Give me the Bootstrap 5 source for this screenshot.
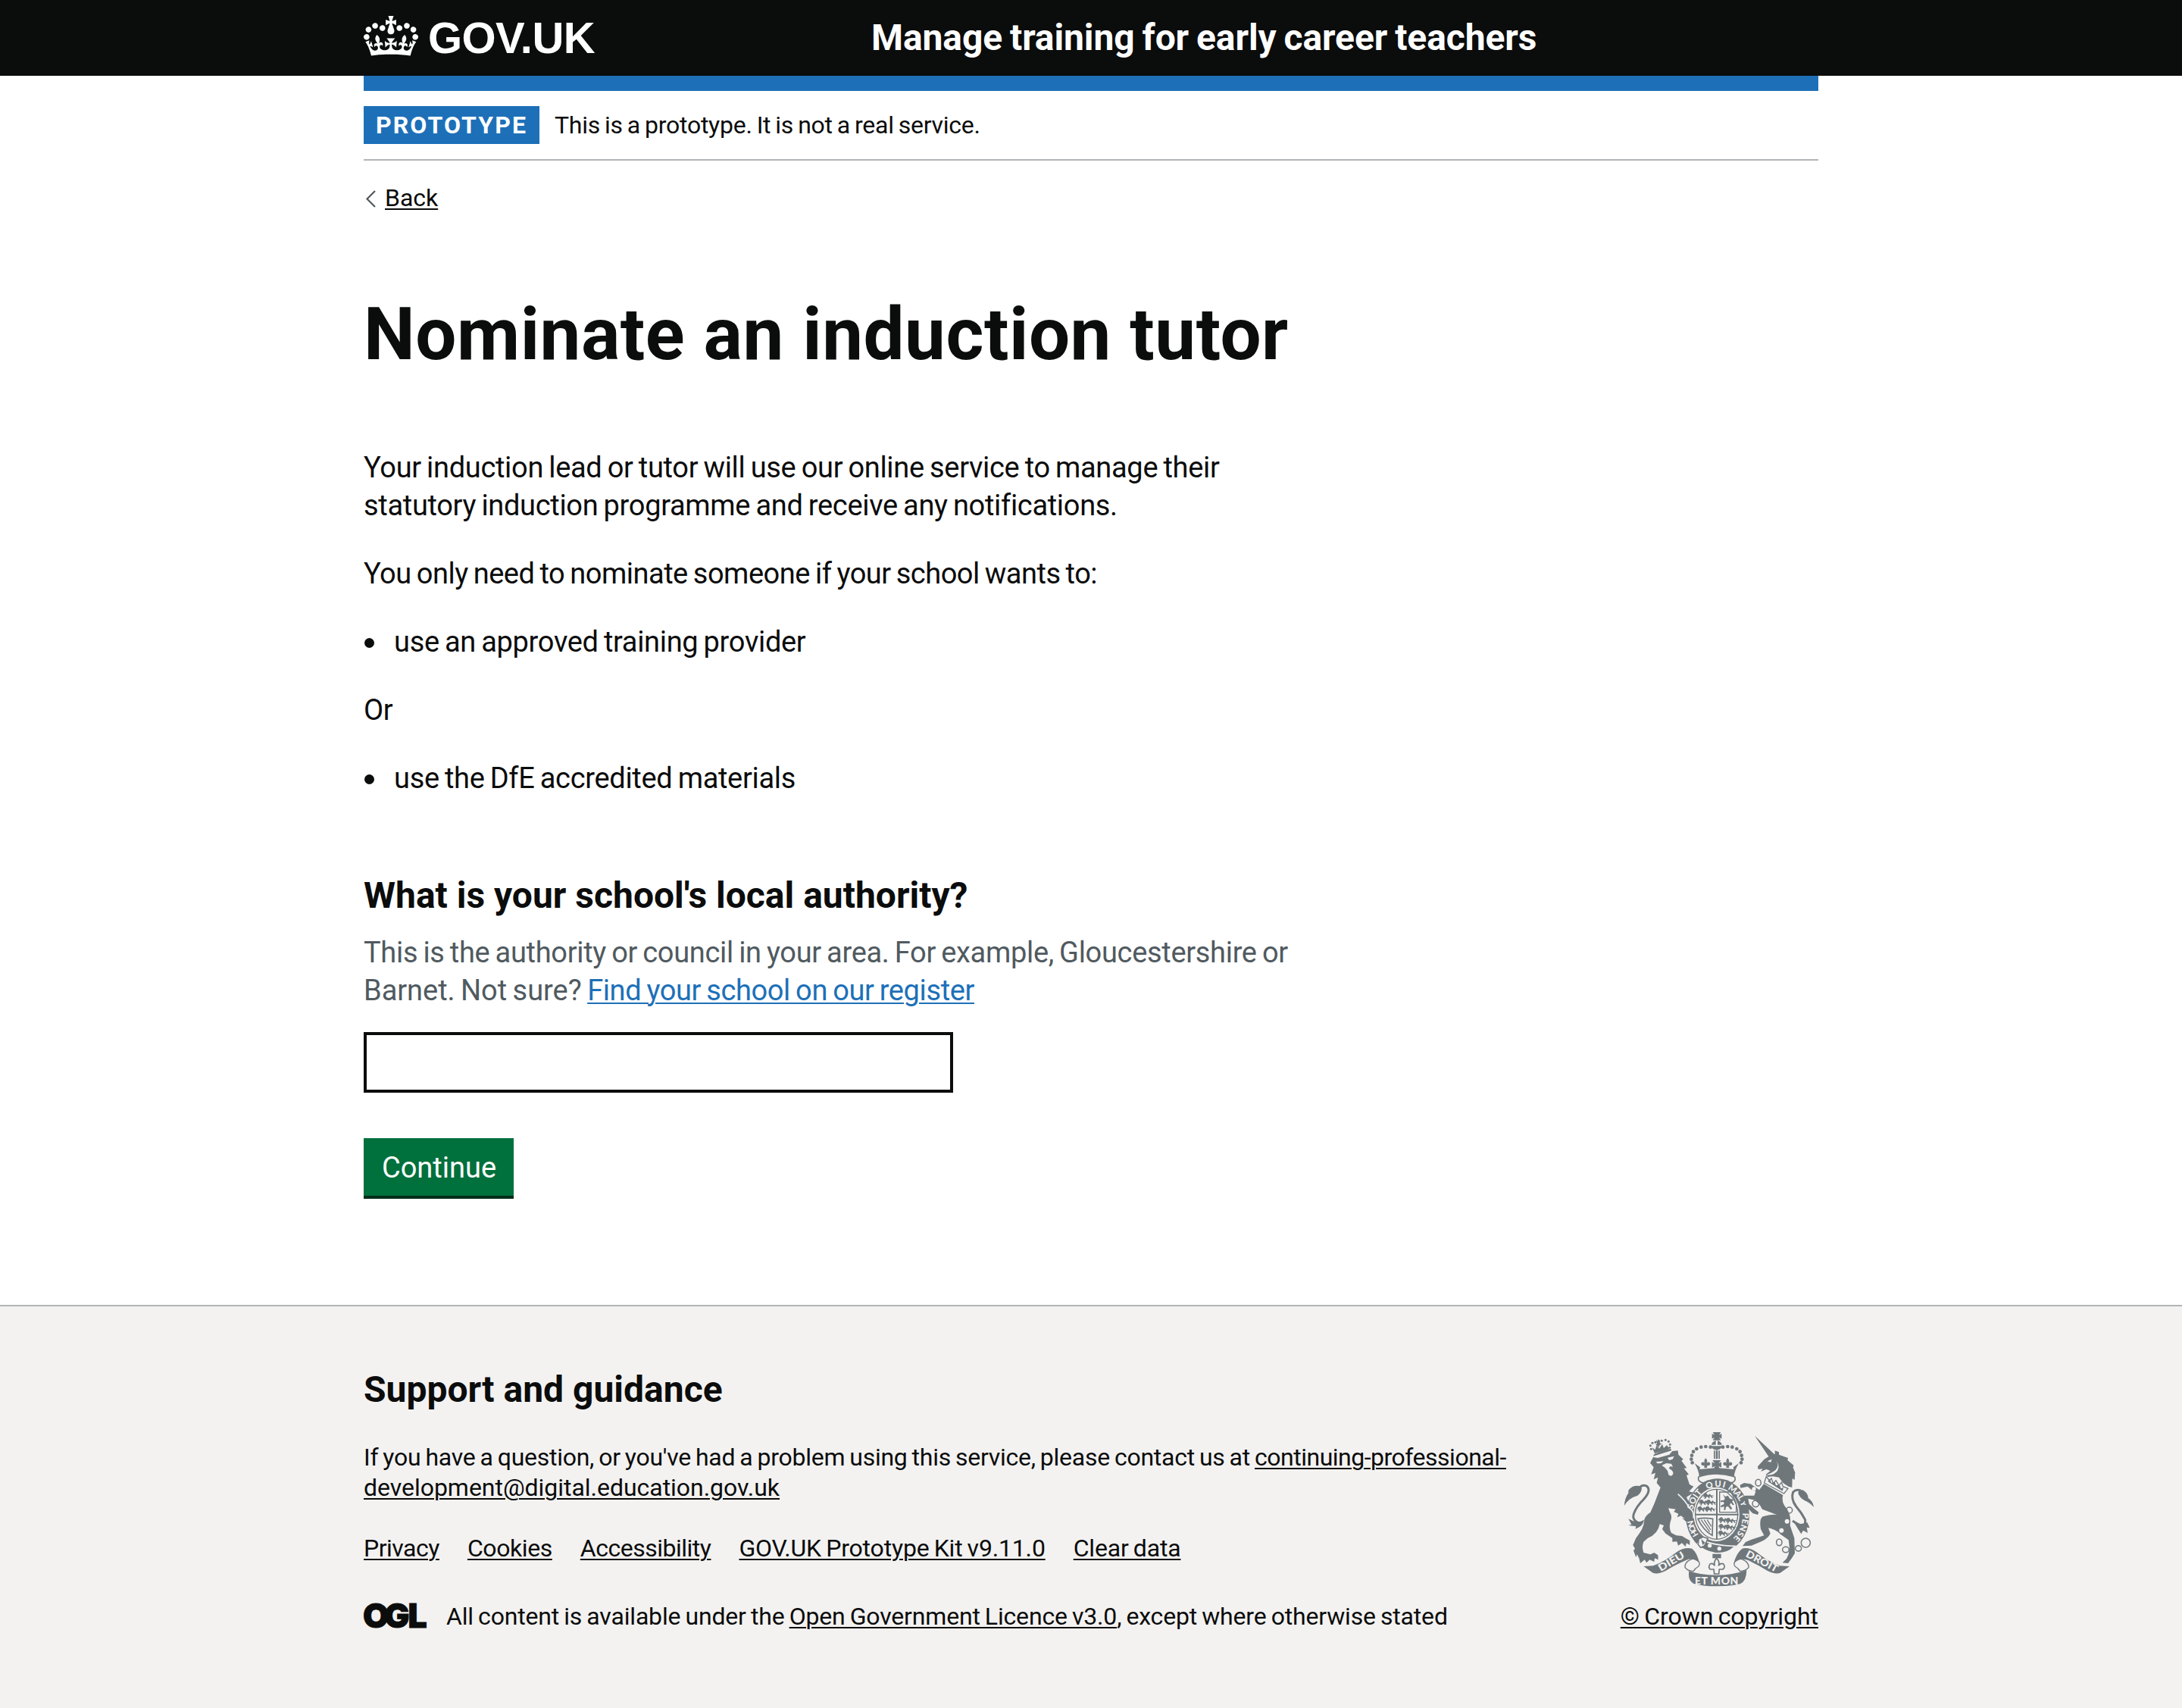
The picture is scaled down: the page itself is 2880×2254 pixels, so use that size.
<!DOCTYPE html>
<html lang="en">
<head>
<meta charset="utf-8">
<meta name="viewport" content="width=device-width, initial-scale=1">
<title>Nominate an induction tutor</title>
<link href="https://cdn.jsdelivr.net/npm/bootstrap@5.3.0/dist/css/bootstrap.min.css" rel="stylesheet">
<style>
:root{--ink:#0b0c0c;--blue:#1d70b8;--rule:#b1b4b6;--muted:#505a5f}
body{font-family:Roboto,"Noto Sans",sans-serif;color:var(--ink);background:#fff;font-size:38px;line-height:50px;min-height:2254px;letter-spacing:-.0083em;word-spacing:-.05em}
a,a:hover{color:var(--ink);text-decoration:underline;text-decoration-thickness:2px;text-underline-offset:3px}
p,ul{margin:0 0 40px}
.wrap{width:1920px;margin:0 auto}
.topbar{background:#0b0c0c;height:100px}
.crown{width:72px;height:53px;margin-top:21px;fill:#fff}
.brand{color:#fff;font:700 58px/60px "Liberation Sans",Arial,sans-serif;letter-spacing:-.01em;margin:20px 0 0 13px;width:585px}
.service{color:#fff;font-weight:700;font-size:48px;line-height:60px;margin-top:20px;letter-spacing:-.002em}
.bluebar{height:20px;background:var(--blue)}
.f32{font-size:32px;line-height:40px;letter-spacing:-.0083em;word-spacing:-.05em}
.phase{padding:20px 0;border-bottom:2px solid var(--rule)}
.phase-tag{background:var(--blue);color:#fff;font-weight:700;height:50px;line-height:50px;width:232px;padding-left:16px;letter-spacing:.0656em;margin-right:20px}
.back{margin-top:29px}
.back svg{width:28px;height:40px}
h1{font-size:96px;line-height:100px;font-weight:700;margin:110px 0 101px;letter-spacing:.0055em;word-spacing:0}
ul.dots{list-style:none;padding:0}
ul.dots li{display:flex;align-items:center}
ul.dots li::before{content:"";width:13px;height:13px;border-radius:50%;background:var(--ink);margin:2px 26px 0 1px}
.q,footer h2{font-size:48px;line-height:60px;font-weight:700;letter-spacing:0;word-spacing:0}
.q{margin:100px 0 20px;display:block}
.hint{color:var(--muted);margin:0 0 30px}
.hint a{color:var(--blue);letter-spacing:-.01em}
.field{width:778px;height:80px;border:4px solid var(--ink);border-radius:0;margin-bottom:60px;padding:0 8px}
.go{display:block;width:198px;height:80px;border:0;border-radius:0;background:#00703c;color:#fff;font-size:38px;line-height:74px;letter-spacing:0;border-bottom:4px solid #002d18;padding:2px 0 0 1px;margin-bottom:140px}
.flat{letter-spacing:-.001em}
.snug{letter-spacing:-.013em}
.tight{letter-spacing:-.0155em}
.loose{letter-spacing:-.0055em}
footer{background:#f3f2f1;border-top:2px solid var(--rule);height:532px}
footer h2{margin:0 0 39px;padding-top:80px}
.links{gap:37px;margin-bottom:50px}
.ogl{width:84px;height:40px;margin-right:25px;overflow:visible}
.arms{margin-top:-14px}
.crest{width:250px;height:205px;display:block;margin:0 6px 19px auto;letter-spacing:0;word-spacing:0}
</style>
</head>
<body>
<header class="topbar">
  <div class="wrap d-flex align-items-start">
    <svg class="crown" viewBox="0 0 132 97"><path fill-rule="evenodd" d="M25 30.2c3.5 1.5 7.7-.2 9.1-3.7 1.5-3.6-.2-7.8-3.9-9.2-3.6-1.4-7.6.3-9.1 3.9-1.4 3.5.3 7.5 3.9 9zM9 39.5c3.6 1.5 7.8-.2 9.2-3.7 1.5-3.6-.2-7.8-3.9-9.1-3.6-1.5-7.6.2-9.1 3.8-1.4 3.5.3 7.5 3.8 9zM4.4 57.2c3.5 1.5 7.7-.2 9.1-3.8 1.5-3.6-.2-7.7-3.9-9.1-3.5-1.5-7.6.3-9.1 3.8-1.4 3.5.3 7.6 3.9 9.1zm38.3-21.4c3.5 1.5 7.7-.2 9.1-3.8 1.5-3.6-.2-7.7-3.9-9.1-3.6-1.5-7.6.3-9.1 3.8-1.3 3.6.4 7.7 3.9 9.1zm64.4-5.6c-3.6 1.5-7.8-.2-9.1-3.7-1.5-3.6.2-7.8 3.8-9.2 3.6-1.4 7.7.3 9.2 3.9 1.3 3.5-.4 7.5-3.9 9zm15.9 9.3c-3.6 1.5-7.7-.2-9.1-3.7-1.5-3.6.2-7.8 3.7-9.1 3.6-1.5 7.7.2 9.2 3.8 1.5 3.5-.3 7.5-3.8 9zm4.7 17.7c-3.6 1.5-7.8-.2-9.2-3.8-1.5-3.6.2-7.7 3.9-9.1 3.6-1.5 7.7.3 9.2 3.8 1.3 3.5-.4 7.6-3.9 9.1zM89.3 35.8c-3.6 1.5-7.8-.2-9.2-3.8-1.4-3.6.2-7.7 3.9-9.1 3.6-1.5 7.7.3 9.2 3.8 1.4 3.6-.3 7.7-3.9 9.1zM69.7 17.7l8.9 4.7V9.3l-8.9 2.8c-.2-.3-.5-.6-.9-.9L72.4 0H59.6l3.5 11.2c-.3.3-.6.5-.9.9l-8.8-2.8v13.1l8.8-4.7c.3.3.6.7.9.9l-5 15.4v.1c-.2.8-.4 1.6-.4 2.4 0 4.1 3.1 7.5 7 8.1h.2c.3 0 .7.1 1 .1.4 0 .7 0 1-.1h.2c4-.6 7.1-4.1 7.1-8.1 0-.8-.1-1.7-.4-2.4V34l-5.1-15.4c.4-.2.7-.6 1-.9zM66 92.8c16.9 0 32.8 1.1 47.1 3.2 4-16.9 8.9-26.7 14-33.5l-9.6-3.4c1 4.9 1.1 7.2 0 10.2-1.5-1.4-3-4.3-4.2-8.7L108.6 76c2.8-2 5-3.2 7.5-3.3-4.4 9.4-10 11.9-13.6 11.2-4.3-.8-6.3-4.6-5.6-7.9 1-4.7 5.7-5.9 8-.5 4.3-8.7-3-11.4-7.6-8.8 7.1-7.2 7.9-13.5 2.1-21.1-8 6.1-8.1 12.3-4.5 20.8-4.7-5.4-12.1-2.5-9.5 6.2 3.4-5.2 7.9-2 7.2 3.1-.6 4.3-6.4 7.8-13.5 7.2-10.3-.9-10.9-8-11.2-13.8 2.5-.5 7.1 1.8 11 7.3L80.2 60c-4.1 4.4-8 5.3-12.3 5.4 1.4-4.4 8-11.6 8-11.6H55.5s6.4 7.2 7.9 11.6c-4.2-.1-8-1-12.3-5.4l1.4 16.4c3.9-5.5 8.5-7.7 10.9-7.3-.3 5.8-.9 12.8-11.1 13.8-7.2.6-12.9-2.9-13.5-7.2-.7-5 3.8-8.3 7.1-3.1 2.7-8.7-4.6-11.6-9.4-6.2 3.7-8.5 3.6-14.7-4.6-20.8-5.8 7.6-5 13.9 2.2 21.1-4.7-2.6-11.9.1-7.7 8.8 2.3-5.5 7.1-4.2 8.1.5.7 3.3-1.3 7.1-5.7 7.9-3.5.7-9-1.8-13.5-11.2 2.5.1 4.7 1.3 7.5 3.3l-4.7-15.4c-1.2 4.4-2.7 7.2-4.3 8.7-1.1-3-.9-5.3 0-10.2l-9.5 3.4c5 6.9 9.9 16.7 14 33.5 14.8-2.1 30.8-3.2 47.7-3.2z"/></svg>
    <div class="brand">GOV.UK</div>
    <div class="service">Manage training for early career teachers</div>
  </div>
</header>
<div class="wrap">
  <div class="bluebar"></div>
  <div class="phase d-flex align-items-center f32">
    <strong class="phase-tag">PROTOTYPE</strong>
    <span>This is a prototype. It is not a real service.</span>
  </div>
  <div class="back d-flex f32">
    <svg viewBox="0 0 28 40"><path d="M15 11L4.500 21.500L15 32" fill="none" stroke="#505a5f" stroke-width="2.200"/></svg>
    <a href="#" class="flat">Back</a>
  </div>
  <main>
    <h1>Nominate an induction tutor</h1>
    <p>Your induction lead or tutor will use our online service to manage their<br>statutory induction programme and receive any notifications.</p>
    <p class="snug">You only need to nominate someone if your school wants to:</p>
    <ul class="dots"><li>use an approved training provider</li></ul>
    <p>Or</p>
    <ul class="dots"><li>use the DfE accredited materials</li></ul>
    <form>
      <label class="q" for="la">What is your school's local authority?</label>
      <div class="hint">This is the authority or council in your area. For example, Gloucestershire or<br><span class="flat">Barnet. Not sure? </span><a href="#">Find your school on our register</a></div>
      <input id="la" class="field d-block" type="text">
      <button type="button" class="go">Continue</button>
    </form>
  </main>
</div>
<footer>
  <div class="wrap">
    <h2>Support and guidance</h2>
    <div class="d-flex justify-content-between f32">
      <div>
        <p>If you have a question, or you've had a problem using this service, please contact us at <a href="#" class="tight">continuing-professional-</a><br><a href="#" class="flat">development@digital.education.gov.uk</a></p>
        <div class="links d-flex"><a href="#" class="tight">Privacy</a><a href="#" class="snug">Cookies</a><a href="#" class="tight">Accessibility</a><a href="#" class="loose">GOV.UK Prototype Kit v9.11.0</a><a href="#" class="loose">Clear data</a></div>
        <div class="d-flex">
          <svg class="ogl" viewBox="0 0 84 40"><text x="-1 27 58.500" y="34.500" font-family="Inter" font-weight="900" font-size="44.500" letter-spacing="0" fill="#0b0c0c" stroke="#0b0c0c" stroke-width="1">OGL</text></svg>
          <div class="loose">All content is available under the <a href="#">Open Government Licence v3.0</a>, except where otherwise stated</div>
        </div>
      </div>
      <div class="arms text-end">
        <svg class="crest" viewBox="72 58 750 615" fill="#6f777b" font-family="Lato" font-weight="900">
          <defs>
            <path id="ring" d="M441 505A99 114 0 0 1 441 277A99 114 0 0 1 441 505"/>
            <g id="fl"><path d="M0-20q9 9 4 20q4-7 12-3q5 8-3 12l-8 1l1 8h-12l1-8l-8-1q-8-4-3-12q8-4 12 3q-5-11 4-20z"/></g>
            <g id="halfcrown"><g><circle cx="413" cy="120" r="7"/><circle cx="394" cy="118" r="7"/><circle cx="376" cy="120" r="7"/><circle cx="358" cy="127" r="7"/><circle cx="345" cy="138" r="7"/><circle cx="339" cy="153" r="7"/><circle cx="337" cy="168" r="7"/><circle cx="341" cy="182" r="7"/></g><path d="M350 184L372 200L370 208L400 205L439 203V226Q405 226 368 236Q368 215 350 184z"/><use href="#fl" x="394" y="184"/></g>
            <g id="beast"><path d="M2 6q8-8 14 0l3 5l8-6l3 6l12 1v3l-7-2l3 9h-4l-5-7l-4 1l1 7h-4l-4-6l-6 1l-3 7h-4l1-8l-7 3l5-8l-6 2v-3z"/></g>
          </defs>
          <!-- royal crown -->
          <path d="M422 61h32l-7 11l10-5v20l-10-5l7 11h-32l7-11l-10 5v-20l10 5z"/>
          <path d="M434 94v17h-17q2-12 17-17zM441 94v17h17q-2-12-17-17zM416 116h42q-2 14-20 16q-20-2-22-16z"/>
          <use href="#halfcrown"/><use href="#halfcrown" transform="matrix(-1 0 0 1 875 0)"/>
          <path d="M426 134h5v33h-5zM434 134h8v33h-8zM445 134h5v33h-5zM421 172h33l-9 13l11-6v22l-11-6l5 12h-25l6-12l-12 6v-22l11 6z"/>
          <path d="M366 238Q437 214 509 238Q516 258 492 262Q437 240 384 262Q360 256 366 238z" fill="#f3f2f1" stroke="#6f777b" stroke-width="5"/>
          <!-- garter and shield -->
          <ellipse cx="441" cy="392" rx="126" ry="147"/>
          <ellipse cx="437" cy="386" rx="91" ry="107" fill="#f3f2f1"/>
          <ellipse cx="437" cy="386" rx="84" ry="99" fill="none" stroke="#6f777b" stroke-width="4"/>
          <path d="M435 287h6v198h-6zM352 384h172v6H352z"/>
          <path d="M449 298h46l20 44v36h-66z" fill="none" stroke="#6f777b" stroke-width="4"/>
          <path d="M462 308l10 8l10-4l8 12l14 4l-5 8l8 12l-6 2l-7-9l-5 8l10 14l-6 5l-11-14l-8 3l-2 12h-6l1-14l-12 4l-2-6l14-8l-2-8l-12 1v-6l14-2l3-8z"/>
          <g><use href="#beast" x="384" y="300"/><use href="#beast" x="368" y="326"/><use href="#beast" x="362" y="352"/><use href="#beast" x="396" y="326"/><use href="#beast" x="392" y="352"/><use href="#beast" x="446" y="396"/><use href="#beast" x="446" y="422"/><use href="#beast" x="444" y="448"/><use href="#beast" x="474" y="398"/><use href="#beast" x="472" y="424"/></g>
          <g fill="none" stroke="#6f777b" stroke-width="5"><path d="M363 404Q385 398 422 404L420 470Q385 450 363 404z"/><path d="M376 408l34 48M388 408l26 40M400 408l16 26" stroke-width="4"/></g>
          <path d="M372 484Q420 510 510 512Q480 545 430 540Q392 534 360 508z" stroke="#f3f2f1" stroke-width="5"/>
          <circle cx="410" cy="510" r="8" fill="#f3f2f1"/><circle cx="448" cy="522" r="8" fill="#f3f2f1"/>
          <!-- pendant -->
          <path d="M421 543h34v17h-34z"/>
          <path d="M437 560Q452 574 444 590Q452 578 464 582Q474 594 462 604H448L446 622H428L426 604H412Q402 594 412 582Q424 578 430 590Q424 574 437 560z" fill="none" stroke="#6f777b" stroke-width="5"/>
          <!-- motto ribbons -->
          <path d="M316 606Q370 627 437 627Q504 627 556 606Q556 650 530 662Q490 671 437 671Q380 671 345 660Q322 645 328 612z"/>
          <path d="M148 592L186 590Q230 575 280 535Q310 515 340 522Q362 540 368 578Q345 556 316 568Q270 588 235 610Q205 625 185 618z"/>
          <path d="M726 592L688 590Q644 575 594 535Q564 515 538 522Q512 545 506 580Q530 556 562 568Q604 588 639 610Q669 625 689 618z"/>
          <g fill="none" stroke="#6f777b" stroke-width="4"><path d="M350 560Q310 570 312 596Q320 608 345 612Q352 600 366 592Q374 580 364 570M524 560Q566 570 564 596Q556 608 530 612Q524 600 510 592Q502 580 512 570"/></g>
          <g fill="#f3f2f1" font-size="42">
            <text x="351" y="663" textLength="172">ET MON</text>
            <text transform="translate(216 614) rotate(-31)" font-size="40" textLength="114" lengthAdjust="spacingAndGlyphs">DIEU</text>
            <text transform="translate(550 552) rotate(28)" font-size="40" textLength="138" lengthAdjust="spacingAndGlyphs">DROIT</text>
          </g>
          <!-- lion -->
          <path d="M174 183L186 160L204 163L250 150L262 136L284 134L286 150L305 168L298 174L319 203L308 204L327 228L318 232L330 268L346 276L328 296L346 300L318 318L330 345L345 372L347 400L342 415L328 404L330 418L315 414L300 400L312 404L296 392L281 398L286 384L268 376L275 366L246 362L252 378Q262 392 256 410Q246 438 258 460L278 470L300 472L316 482L331 490L331 508L318 500L314 514L300 500L285 510L280 494L262 495L262 480L235 462L222 445L228 430L212 425Q205 465 165 480L148 495Q140 515 148 538L175 545L190 538L205 548L206 566L192 560L190 574L172 566L160 578L152 566L135 580L130 560L122 545L118 556L108 530L114 522L106 508L118 480Q150 440 150 415Q150 395 175 378L190 345L215 280L200 262L205 240L188 248L195 222L178 228L188 200L180 190z"/>
          <path d="M186 156Q220 146 258 134L256 126Q225 132 190 148z"/>
          <path d="M192 145L182 122L194 130L200 112L210 126L222 108L228 124L240 112L250 128z"/>
          <g><circle cx="178" cy="128" r="4.500"/><circle cx="175" cy="114" r="4.500"/><circle cx="183" cy="104" r="4.500"/><circle cx="195" cy="101" r="4.500"/><circle cx="220" cy="95" r="4.500"/><circle cx="235" cy="92" r="4.500"/><circle cx="247" cy="98" r="4.500"/><circle cx="253" cy="110" r="4.500"/><circle cx="251" cy="122" r="4.500"/></g>
          <path d="M198 90l5 7l4-8l6 6l-1 9l8 3l-9 6l-2 8l-7-7l-6-2l5-6z"/>
          <g fill="#f3f2f1"><path d="M197 178l30-2l-10 8l-14 1zM243 162l26-6l-6 12l-14 4zM220 192l18-8l20 2l6 12l-10-2l-6 8q20 10 17 22q-6 14-18 4l-4-16l-10-12z"/></g>
          <path d="M284 306Q312 330 330 362Q348 372 346 402" fill="none" stroke="#f3f2f1" stroke-width="5"/>
          <path d="M140 425Q98 412 110 382Q120 355 150 325Q180 290 160 274Q142 266 128 284" fill="none" stroke="#6f777b" stroke-width="9"/>
          <path d="M72 352Q72 325 88 302Q84 288 104 277Q122 270 140 277Q144 298 124 312Q88 322 72 352zM88 430L100 426L88 404L110 414Q130 420 150 408Q146 430 128 438L116 444L118 434z"/>
          <!-- garter motto and buckle -->
          <g fill="#f3f2f1" font-size="34">
            <text font-size="32"><textPath href="#ring" startOffset="13%" textLength="62">HON</textPath></text>
            <text><textPath href="#ring" startOffset="28.500%" textLength="78">SOIT</textPath></text>
            <text><textPath href="#ring" startOffset="43.500%" textLength="72">QUI</textPath></text>
            <text><textPath href="#ring" startOffset="56%" textLength="94">MAL Y</textPath></text>
            <text><textPath href="#ring" startOffset="73.500%" textLength="110">PENSE</textPath></text>
          </g>
          <path d="M366 484L384 476L402 482L397 496L388 512L374 518L364 506z" fill="#f3f2f1" stroke="#6f777b" stroke-width="5"/><path d="M376 484l6 24l10-10z"/>
          <!-- unicorn -->
          <path d="M588 75L668 150L645 160zM602 208L600 197L626 168L652 152L668 148V134L684 140V150L720 163L718 172L742 192L740 202L748 220L746 250L737 244L736 280L722 276L700 262L684 240L660 236L640 238L632 228L650 214L634 208L620 214L612 216L620 206z"/>
          <path d="M638 176l18-8l-4 12zM672 176Q688 192 670 212Q652 226 634 230Q662 234 678 214Q690 192 672 176z" fill="#f3f2f1"/>
          <path d="M634 236L626 262L704 304L720 284L700 276L694 260L684 272L672 252L662 264L654 244L646 252z" fill="#f3f2f1" stroke="#6f777b" stroke-width="4"/>
          <path d="M640 256l8-10l6 16l14-4l4 14l14-4l6 16l10-4l-4 14z"/>
          <path d="M624 266L700 310Q694 335 706 352Q735 385 728 430L745 480L747 540L735 560L720 580L698 578L714 562L722 545L726 520L722 488L690 465Q670 445 642 440L650 462Q640 485 600 500L575 510L540 512L552 496L575 486L625 470L612 445Q605 405 620 395Q650 385 676 388Q645 376 618 366L606 345L588 330L562 324L566 345L586 364L604 378L600 388L580 382L560 362L544 324L528 326L550 312L586 312L592 296L576 290L560 276L532 282L530 270L546 262L572 266L606 290z"/>
          <path d="M738 412Q792 450 788 408Q774 380 752 355Q730 325 740 298Q752 286 770 292" fill="none" stroke="#6f777b" stroke-width="9"/>
          <path d="M822 358Q820 335 800 322Q798 300 778 290Q762 288 760 302Q766 322 786 332Q806 340 822 358zM740 412Q760 432 796 418L806 440L794 438L798 460L780 450L772 464L762 448Z"/>
          <g fill="none" stroke="#6f777b" stroke-width="4.500"><ellipse cx="602" cy="261" rx="11" ry="13"/><ellipse cx="592" cy="344" rx="13" ry="13"/><circle cx="725" cy="370" r="12"/><ellipse cx="685" cy="497" rx="11" ry="13"/><ellipse cx="711" cy="526" rx="13" ry="11"/><ellipse cx="761" cy="521" rx="12" ry="11"/><circle cx="790" cy="499" r="18"/></g>
          <g fill="#f3f2f1"><circle cx="585" cy="286" r="8"/><circle cx="716" cy="414" r="9"/><circle cx="694" cy="450" r="9"/></g>
        </svg>
        <a href="#" class="flat">© Crown copyright</a>
      </div>
    </div>
  </div>
</footer>
<script src="https://cdn.jsdelivr.net/npm/bootstrap@5.3.0/dist/js/bootstrap.bundle.min.js"></script>
</body>
</html>
